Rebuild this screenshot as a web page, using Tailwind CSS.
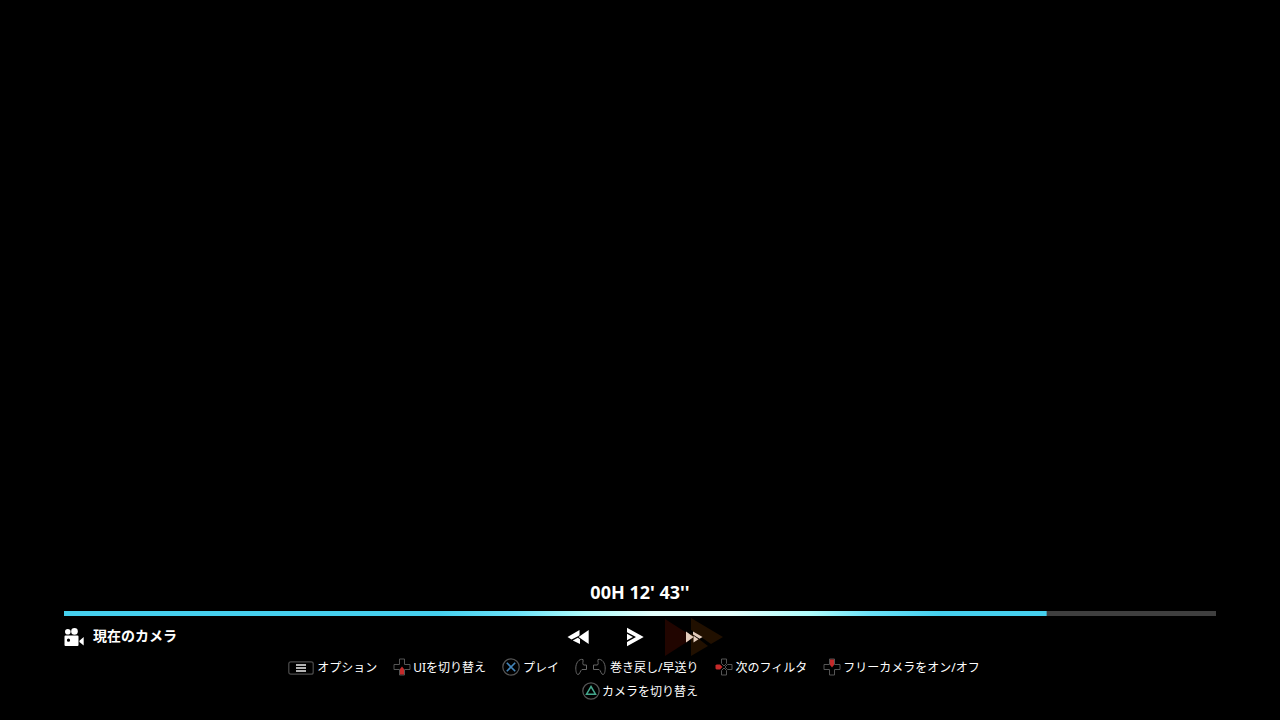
<!DOCTYPE html>
<html lang="ja">
<head>
<meta charset="utf-8">
<meta name="viewport" content="width=device-width, initial-scale=1">
<title>リプレイ</title>
<script src="https://cdn.jsdelivr.net/npm/@tailwindcss/browser@4"></script>
</head>
<body class="min-h-screen bg-black text-white font-['Noto_Sans','Noto_Sans_CJK_JP',sans-serif] flex flex-col justify-end">
<main class="px-[5%] pb-4">
  <p class="text-center text-lg leading-6 font-bold pb-[7px]"><time datetime="PT12M43S">00H 12' 43''</time></p>

  <input type="range" min="0" max="1152" value="982" aria-label="再生位置" class="block w-full h-[5px] appearance-none bg-[#3f3f3f] bg-no-repeat bg-[length:85.3%_100%] bg-[linear-gradient(90deg,#45d0ee_0%,#45d0ee_38%,#6be2f8_46%,#aefcfb_53%,#e4fffc_60%,#e4fffc_68%,#aefcfb_76%,#6be2f8_82%,#45d0ee_89%,#45d0ee_100%)] [&::-webkit-slider-thumb]:appearance-none [&::-webkit-slider-thumb]:w-0">

  <div class="grid grid-cols-[1fr_auto_1fr] items-center h-10 mt-px">
    <div class="flex items-center gap-[9px] pb-0.5">
      <svg class="w-5 h-[18px] mt-px" viewBox="0 0 20 18" fill="#fff" aria-hidden="true">
        <circle cx="3.8" cy="3.7" r="2.8"/><circle cx="10.5" cy="3.4" r="3.3"/>
        <path fill-rule="evenodd" d="M1.5 7.5H13.500q1 0 1 1V17q0 1-1 1H1.500q-1 0-1-1V8.500q0-1 1-1ZM4.500 10.600a1.600 1.600 0 1 0 0 3.200a1.600 1.600 0 0 0 0-3.200Z"/>
        <path d="M15.400 12.800L19.700 9V17.500L15.400 14Z"/>
      </svg>
      <span class="text-sm font-bold">現在のカメラ</span>
    </div>

    <div class="flex items-center gap-[37px] mr-1">
      <button type="button" aria-label="巻き戻し" class="w-[22px] h-[14px]">
        <svg class="block w-full h-full" viewBox="0 0 22 14" fill="#fff" aria-hidden="true">
          <path d="M21.700 0V14L11.500 7Z"/>
          <path d="M12.500 0V5.200L11 6.200L4.500 9.600L.5 7Z"/>
          <path d="M5.800 10.500L10.800 7.700L13 9.300V14Z"/>
        </svg>
      </button>
      <button type="button" aria-label="プレイ" class="w-[18px] h-[20px]">
        <svg class="block w-full h-full" viewBox="0 0 18 20" fill="#fff" aria-hidden="true">
          <path d="M1 .8L17.700 10L1 19.200V15L10 10L1 5.200Z"/>
          <path d="M1 6.800L7 10L1 13.300Z"/>
        </svg>
      </button>
      <button type="button" aria-label="早送り" class="relative w-[28px] h-[14px]">
        <svg class="absolute -left-4 -top-3 w-[58px] h-[38px]" viewBox="0 0 58 38" aria-hidden="true">
          <path fill="#210500" d="M0 1L25 17V22L0 38Z"/>
          <path fill="#211000" d="M26 0L58 19L46 26L26 12Z"/>
          <path fill="#211000" d="M26 15L43 28L26 38Z"/>
        </svg>
        <svg class="relative block w-full h-full" viewBox="-3 0 28 14" fill="#e4cdbd" aria-hidden="true">
          <path d="M2 1.500L9 6.500V7.500L2 12.500Z"/>
          <path d="M9 1.500L18.500 7L15.500 8.700L9 4.500Z"/>
          <path d="M9.500 5.800L14.500 9.300L9.500 12.500Z"/>
        </svg>
      </button>
    </div>
    <div></div>
  </div>

  <div class="text-xs leading-6" aria-label="操作ガイド">
    <div class="flex flex-wrap justify-center gap-x-4 -mt-px pr-3">
      <div class="flex items-center gap-[3px]">
        <svg class="w-[26px] h-[14px]" viewBox="0 0 26 14" fill="none" aria-hidden="true">
          <rect x=".8" y=".8" width="24.400" height="12.400" rx="2" stroke="#4c4c4c" stroke-width="1.200"/>
          <path d="M8 4H18M8 7H18M8 10H18" stroke="#eee" stroke-width="1.400"/>
        </svg>
        <span>オプション</span>
      </div>
      <div class="flex items-center gap-0.5">
        <svg class="w-[18px] h-[18px] mb-0.5" viewBox="0 0 18 18" fill="none" aria-hidden="true">
          <path d="M6.500 1H11.500V6.500H17V11.500H11.500V17H6.500V11.500H1V6.500H6.500Z" stroke="#555" stroke-linejoin="round"/>
          <path d="M9 8.500L11 11V16.500H7V11Z" fill="#c52a2a"/>
        </svg>
        <span>UIを切り替え</span>
      </div>
      <div class="flex items-center gap-[3px]">
        <svg class="w-[18px] h-[18px] mb-0.5" viewBox="0 0 18 18" fill="none" aria-hidden="true">
          <circle cx="9" cy="9" r="8.200" stroke="#555" stroke-width="1.200"/>
          <path d="M4.800 4.800L13.200 13.200M13.200 4.800L4.800 13.200" stroke="#4385ba" stroke-width="1.600"/>
        </svg>
        <span>プレイ</span>
      </div>
      <div class="flex items-center gap-1">
        <svg class="w-[31px] h-[18px] mb-0.5" viewBox="0 0 31 18" fill="none" stroke="#666" stroke-linejoin="round" aria-hidden="true">
          <path d="M8 1.500C4 .5 .8 5 .8 10C.8 13.500 1.500 16.500 3 16.500C5 16.500 5 12.500 7 11.500H11.500V7H8.500C7 5.500 8.500 3.500 8 1.500Z"/>
          <path d="M23 1.500C27 .5 30.200 5 30.200 10C30.200 13.500 29.500 16.500 28 16.500C26 16.500 26 12.500 24 11.500H18.500V7H22.500C24 5.500 22.500 3.500 23 1.500Z"/>
        </svg>
        <span>巻き戻し/早送り</span>
      </div>
      <div class="flex items-center gap-[3px]">
        <svg class="w-[18px] h-[18px] mb-0.5" viewBox="0 0 18 18" fill="none" aria-hidden="true">
          <path d="M6.500 1H11.500V5.500L9 8L6.500 5.500ZM6.500 17H11.500V12.500L9 10L6.500 12.500ZM17 6.500V11.500H12.500L10 9L12.500 6.500Z" stroke="#555" stroke-linejoin="round"/>
          <path d="M1.500 6.500H5L7.500 9L5 11.500H1.500L.5 10.500V7.500Z" fill="#c52a2a"/>
        </svg>
        <span>次のフィルタ</span>
      </div>
      <div class="flex items-center gap-0.5">
        <svg class="w-[18px] h-[18px] mb-0.5" viewBox="0 0 18 18" fill="none" aria-hidden="true">
          <path d="M6.500 1H11.500V6.500H17V11.500H11.500V17H6.500V11.500H1V6.500H6.500Z" stroke="#555" stroke-linejoin="round"/>
          <path d="M9 9.500L11 7V1.500H7V7Z" fill="#c52a2a"/>
        </svg>
        <span>フリーカメラをオン/オフ</span>
      </div>
    </div>
    <div class="flex items-center justify-center gap-0.5">
      <svg class="w-[18px] h-[18px] mb-0.5" viewBox="0 0 18 18" fill="none" aria-hidden="true">
        <circle cx="9" cy="9" r="8.200" stroke="#555" stroke-width="1.200"/>
        <path d="M9 4.500L13.500 12.200H4.500Z" stroke="#45a78d" stroke-width="1.500"/>
      </svg>
      <span>カメラを切り替え</span>
    </div>
  </div>
</main>
</body>
</html>
